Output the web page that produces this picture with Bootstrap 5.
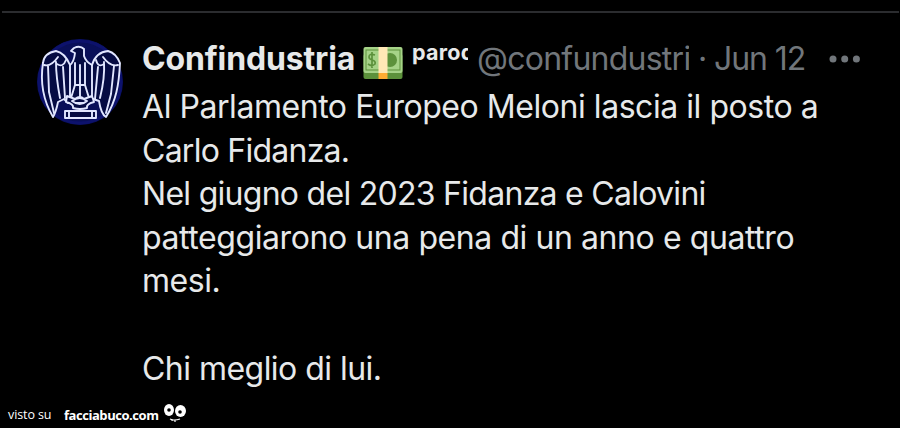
<!DOCTYPE html>
<html lang="it">
<head>
<meta charset="utf-8">
<meta name="viewport" content="width=device-width, initial-scale=1">
<title>Confindustria parody</title>
<link href="https://cdn.jsdelivr.net/npm/bootstrap@5.3.0/dist/css/bootstrap.min.css" rel="stylesheet">
<style>
body{background:#000;color:#e7e9ea;width:900px;height:428px;font-family:Inter,"Liberation Sans",sans-serif}
.post{height:390px;margin:11px 1px 0 2px;border-top:2px solid #2b2c2f;padding:25px 0 0 34px}
.avatar{width:88px;height:88px}
.post-main{margin-left:18px;width:760px}
.post-head{height:47px;line-height:42px;font-size:32px}
.name{font-weight:700;width:221px;letter-spacing:-.15px}
.cash{width:40px;height:36px;margin-top:7px}
.tag{font-weight:700;font-size:21.5px;line-height:29px;width:56px;margin-left:9px;letter-spacing:.25px}
.muted-text{color:#71767b}
.handle{width:212px;margin-left:9px;letter-spacing:-.75px}
.post-date{margin-left:9px;letter-spacing:-1.1px}
.more{width:32px;height:8px;margin:17px 0 0 24px}
.post-body{font-size:32px;line-height:43.6px;letter-spacing:-.45px}
.l2{letter-spacing:-.75px}
.l3{letter-spacing:-.72px}
.l4{letter-spacing:-.42px}
.l7{letter-spacing:-.53px}
.credit{height:27px;font:12.5px/28px "Open Sans",sans-serif;color:#fff;padding-left:8px}
.credit-lead{width:43px;letter-spacing:-.1px}
.site{font-weight:700;width:95px;margin-left:13px;font-size:13px;letter-spacing:-.45px}
.eyes{width:24px;height:20px;margin:2px 0 0 4px}
</style>
</head>
<body class="overflow-hidden">
<article class="post d-flex align-items-start">
<svg class="avatar flex-shrink-0" viewBox="0 0 88 88"><circle cx="44" cy="44" r="43" fill="#090f59"/><circle cx="44" cy="44" r="41" fill="none" stroke="#0d126c" stroke-width="3"/>
<g fill="#050b43" stroke="#e1e6ff" stroke-width="1.9" stroke-linejoin="round" stroke-linecap="round">
<path d="M35 13 38 10Q44 7 48 11L48 18Q50 24 56 27Q60 14 72 13Q80 15 84 25C83 47 80 63 70 79Q65 76 63 63L57 61 54 65H32L28 61 22 64Q20 74 17 79C7 62 4 44 7 25Q8 15 20 13Q29 15 34 27Q38 24 39 15L35 13Z"/>
<path fill="none" d="M8 27Q15 29 22 19M12 28 13 54 18 75M20 24Q20 39 24 60M21 26Q27 30 30 22M27 29 29 60M34 27V59M39 25V47L35 60M44 27V58M49 25V47L53 60M56 27V59M62 29 59 61M68 24Q69 40 64 60M67 19Q74 29 82 27M78 28 75 56 70 75M60 22Q62 30 68 26M39 47H49"/>
<path d="M30 64Q38 66 37 70 44 72 51 70 50 66 58 64L56 58 48 61Q44 57 39 61L31 58ZM36 63Q44 57 51 63Q44 69 36 63ZM29 73H60V80H29ZM33 73V80M56 73V80"/>
</g></svg>
<div class="post-main">
<header class="post-head d-flex align-items-start text-nowrap">
<span class="name">Confindustria</span>
<svg class="cash flex-shrink-0" viewBox="0 0 40 36"><rect x=".5" y="9" width="39" height="25" rx="2" fill="#5c913b"/><rect x=".5" y="2" width="39" height="26" rx="2" fill="#a6d388"/><rect x="3" y="5" width="34" height="20" fill="none" stroke="#5c913b" stroke-width="1"/><circle cx="27" cy="15" r="7" fill="#5c913b"/><path d="M12 10Q6 8 6 12 6 14 9 15 13 16 12 19 9 22 5 19M9 7V23" fill="none" stroke="#5c913b" stroke-width="1.7"/><path d="M15.500 2h9v26h-9z" fill="#ffe8b6"/><path d="M15.500 28h9v6h-9z" fill="#ffac33"/></svg>
<span class="tag overflow-hidden flex-shrink-0">parod</span>
<span class="handle muted-text overflow-hidden flex-shrink-0">@confundustri</span>
<span class="post-date muted-text">· Jun 12</span>
<svg class="more flex-shrink-0" viewBox="0 0 32 8" fill="#71767b"><circle cx="4" cy="4" r="3.500"/><circle cx="15.700" cy="4" r="3.500"/><circle cx="27.400" cy="4" r="3.500"/></svg>
</header>
<div class="post-body text-nowrap">
<div>Al Parlamento Europeo Meloni lascia il posto a</div>
<div class="l2">Carlo Fidanza.</div>
<div class="l3">Nel giugno del 2023 Fidanza e Calovini</div>
<div class="l4">patteggiarono una pena di un anno e quattro</div>
<div>mesi.</div>
<div>&nbsp;</div>
<div class="l7">Chi meglio di lui.</div>
</div>
</div>
</article>
<footer class="credit d-flex align-items-start text-nowrap"><span class="credit-lead">visto su</span><span class="site">facciabuco.com</span>
<svg class="eyes" viewBox="0 0 24 20"><ellipse cx="6" cy="7" rx="5" ry="6" fill="#fff"/><ellipse cx="17.500" cy="8" rx="5.500" ry="6" fill="#fff"/><circle cx="6" cy="7" r="1.800"/><circle cx="17" cy="9" r="1.800"/><path d="M7 16Q11 18 17 16M9 16v2M12 17v2" stroke="#fff" stroke-width="1.200" fill="none"/></svg></footer>
<script src="https://cdn.jsdelivr.net/npm/bootstrap@5.3.0/dist/js/bootstrap.bundle.min.js"></script>
</body>
</html>
